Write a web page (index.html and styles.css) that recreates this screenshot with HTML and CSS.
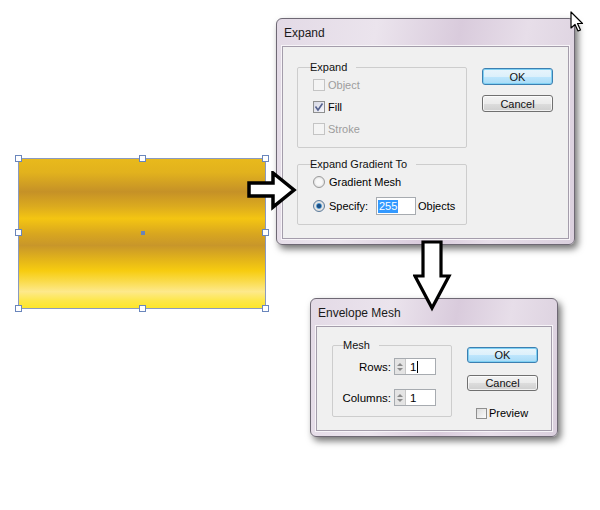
FILE: index.html
```html
<!DOCTYPE html>
<html>
<head>
<meta charset="utf-8">
<link rel="stylesheet" href="styles.css">
</head>
<body>
<div class="canvas">
  <div class="artwork">
    <span class="handle h-tl"></span><span class="handle h-tm"></span><span class="handle h-tr"></span>
    <span class="handle h-ml"></span><span class="handle h-mr"></span>
    <span class="handle h-bl"></span><span class="handle h-bm"></span><span class="handle h-br"></span>
    <span class="center-dot"></span>
  </div>

  <div class="dialog dlg-expand">
    <div class="titlebar">Expand</div>
    <div class="panel">
      <div class="groups">
        <fieldset class="group g-expand">
          <legend>Expand</legend>
          <div class="row disabled"><span class="cb"></span>Object</div>
          <div class="row"><span class="cb checked"><svg width="10" height="10" viewBox="0 0 10 10"><path d="M1.5 4.5 L4 8 L8.5 1.5" fill="none" stroke="#55628f" stroke-width="1.6"/></svg></span>Fill</div>
          <div class="row disabled"><span class="cb"></span>Stroke</div>
        </fieldset>
        <fieldset class="group g-grad">
          <legend>Expand Gradient To</legend>
          <div class="row"><span class="radio"></span>Gradient Mesh</div>
          <div class="row row-spec"><span class="radio on"></span><span class="spec-label">Specify:</span><span class="textbox"><span class="sel">255</span></span><span class="after">Objects</span></div>
        </fieldset>
      </div>
      <div class="buttons">
        <div class="btn default">OK</div>
        <div class="btn">Cancel</div>
      </div>
    </div>
  </div>

  <div class="dialog dlg-mesh">
    <div class="titlebar">Envelope Mesh</div>
    <div class="panel">
      <fieldset class="group g-mesh">
        <legend>Mesh</legend>
        <div class="mesh-grid">
          <span class="mlabel">Rows:</span>
          <span class="spin"><span class="arrows"><i class="up"></i><i class="down"></i></span><span class="val">1<span class="caret"></span></span></span>
          <span class="mlabel">Columns:</span>
          <span class="spin"><span class="arrows"><i class="up"></i><i class="down"></i></span><span class="val">1</span></span>
        </div>
      </fieldset>
      <div class="buttons">
        <div class="btn default">OK</div>
        <div class="btn">Cancel</div>
        <div class="row preview"><span class="cb"></span>Preview</div>
      </div>
    </div>
  </div>

  <svg class="arrow-right" width="54" height="40" viewBox="0 0 54 40">
    <polygon points="3,12 27,12 27,2 48,19 27,36 27,25 3,25" fill="#fff" stroke="#000" stroke-width="3.5" stroke-linejoin="miter"/>
  </svg>

  <svg class="arrow-down" width="40" height="74" viewBox="0 0 40 74">
    <polygon points="10,2 28,2 28,36 36,36 19,68 2,36 10,36" fill="#fff" stroke="#000" stroke-width="3.2"/>
  </svg>

  <svg class="cursor" width="14" height="22" viewBox="0 0 14 22">
    <path d="M1 1 L1 17 L5 13.5 L8 20 L10.5 19 L7.5 12.5 L12.5 12.5 Z" fill="#fff" stroke="#000" stroke-width="1.2" stroke-linejoin="round"/>
  </svg>
</div>
</body>
</html>
```
FILE: styles.css
```css
* { box-sizing: border-box; }
html, body { margin: 0; padding: 0; background: #fff; }
body { font-family: "Liberation Sans", Arial, sans-serif; font-size: 11px; color: #000; }

.canvas { position: relative; width: 600px; height: 510px; overflow: hidden; }

/* artwork */
.artwork {
  position: absolute; left: 18px; top: 158px; width: 248px; height: 151px;
  border: 1px solid #8a9ac0;
  background: linear-gradient(to bottom,
    #e8b91c 0%, #e2b21d 9%, #c59127 22%, #dcab1e 32%, #f4c512 40%,
    #d9a71f 50%, #c8962a 58%, #e2b31a 67%, #f7cc10 75%, #fadb4a 82%,
    #fde98c 89%, #fde74a 95%, #fde62a 100%);
}
.handle { position: absolute; width: 7px; height: 7px; background: #fff; border: 1px solid #6a86bc; }
.h-tl { left: -4px; top: -4px; } .h-tm { left: 120px; top: -4px; } .h-tr { right: -4px; top: -4px; }
.h-ml { left: -4px; top: 70px; } .h-mr { right: -4px; top: 70px; }
.h-bl { left: -4px; bottom: -4px; } .h-bm { left: 120px; bottom: -4px; } .h-br { right: -4px; bottom: -4px; }
.center-dot { position: absolute; left: 122px; top: 72px; width: 4px; height: 4px; background: #6a84b8; }

.arrow-right { position: absolute; left: 246px; top: 171px; z-index: 5; }
.arrow-down { position: absolute; left: 413px; top: 240px; z-index: 5; }
.cursor { position: absolute; left: 570px; top: 11px; z-index: 6; }

/* dialogs */
.dialog {
  position: absolute; display: flex; flex-direction: column;
  border: 1px solid #6e6874; border-radius: 6px;
  background: linear-gradient(100deg, #e3dae6 0%, #ebe4ed 30%, #d9cbdc 55%, #e7dee9 75%, #dacfdd 100%);
  box-shadow: 3px 4px 7px rgba(0,0,0,0.55);
  padding: 0 5px 5px 5px;
}
.dlg-expand { left: 276px; top: 18px; width: 299px; height: 227px; }
.dlg-mesh { left: 310px; top: 298px; width: 248px; height: 139px; }
.titlebar { height: 27px; display: flex; align-items: center; padding-left: 2px; font-size: 12px; color: #1a1a1a; }
.panel {
  flex: 1; display: flex; align-items: flex-start;
  background: #f0f0f0; border: 1px solid #a49dab;
  box-shadow: 0 0 0 1px #f7f4f8;
}
.dlg-expand .panel { padding: 14px 0 0 14px; gap: 15px; }
.dlg-mesh .panel { padding: 12px 0 0 15px; gap: 15px; }

.groups { display: flex; flex-direction: column; gap: 10px; width: 170px; }
fieldset.group { margin: 0; border: 1px solid #cdcdcd; border-radius: 2px; padding: 0 0 0 15px; min-width: 0; }
fieldset.group legend { padding: 0 3px; line-height: 13px; font-size: 11px; color: #111; position: relative; left: -6px; }
.g-expand { padding-bottom: 7px !important; }
.g-grad { padding-bottom: 5px !important; }

.row { display: flex; align-items: center; height: 22px; gap: 3px; }
.row.disabled { color: #9d9d9d; }
.cb {
  width: 12px; height: 12px; border: 1px solid #8f8f8f; background: linear-gradient(135deg, #dcdcdc, #fbfbfb);
  display: inline-flex; align-items: center; justify-content: center;
}
.row.disabled .cb { border-color: #c4c4c4; background: #f4f4f4; }
.cb.checked { border-color: #8e8f8f; background: linear-gradient(135deg, #d6d8e4, #f6f6fa); }

.radio {
  width: 12px; height: 12px; border-radius: 50%; border: 1px solid #9a9a9a;
  background: radial-gradient(circle at 50% 50%, #f8f8f8 0 40%, #d0d0d0 100%);
  margin-right: 1px;
}
.radio.on { background: radial-gradient(circle at 50% 50%, #1b4f86 0 26%, #5fa2d4 36%, #e6e6e6 48%, #d0d0d0 100%); border-color: #5c7c9c; }
.row-spec { height: 26px; }
.spec-label { width: 44px; }
.textbox { width: 40px; height: 18px; border: 1px solid #a7abb0; background: #fff; display: flex; align-items: center; padding-left: 1px; }
.sel { background: #3399ff; color: #fff; padding: 0 1px; line-height: 13px; }
.after { margin-left: -1px; }

.buttons { display: flex; flex-direction: column; width: 71px; }
.dlg-expand .buttons { margin-top: 7px; gap: 10px; }
.dlg-mesh .buttons { margin-top: 8px; gap: 12px; }
.btn {
  height: 17px; border: 1px solid #707070; border-radius: 3px;
  background: linear-gradient(to bottom, #f3f3f3 0%, #ebebeb 50%, #dddddd 51%, #cfcfcf 100%);
  display: flex; align-items: center; justify-content: center; font-size: 11px; color: #111;
  box-shadow: inset 0 0 0 1px rgba(255,255,255,0.7);
}
.btn.default {
  border-color: #3c7fb1;
  background: linear-gradient(to bottom, #e8f5fc 0%, #dcf0fb 50%, #bee6fd 51%, #a9dbf6 100%);
  box-shadow: inset 0 0 0 1px #7fd0f3;
}
.dlg-mesh .btn { height: 16px; }
.preview { margin-left: 9px; margin-top: 4px; height: 12px; gap: 2px; }
.preview .cb { width: 11px; height: 11px; }

/* mesh */
.g-mesh { width: 120px; padding: 6px 0 10px 0 !important; }
.g-mesh legend { margin-left: 13px; }
.mesh-grid { display: grid; grid-template-columns: 58px 42px; column-gap: 3px; row-gap: 14px; align-items: center; }
.mlabel { text-align: right; font-size: 11.5px; }
.spin { display: flex; height: 17px; border: 1px solid #a7abb0; background: #fff; }
.arrows { width: 11px; display: flex; flex-direction: column; justify-content: center; align-items: center; gap: 2px; background: #e4e4e4; border-right: 1px solid #c8c8c8; }
.arrows i { width: 0; height: 0; border-left: 3px solid transparent; border-right: 3px solid transparent; }
.arrows i.up { border-bottom: 3px solid #8a8a8a; }
.arrows i.down { border-top: 3px solid #8a8a8a; }
.val { display: flex; align-items: center; padding-left: 4px; font-size: 11.5px; }
.caret { display: inline-block; width: 1px; height: 12px; background: #000; margin-left: 1px; }
```
